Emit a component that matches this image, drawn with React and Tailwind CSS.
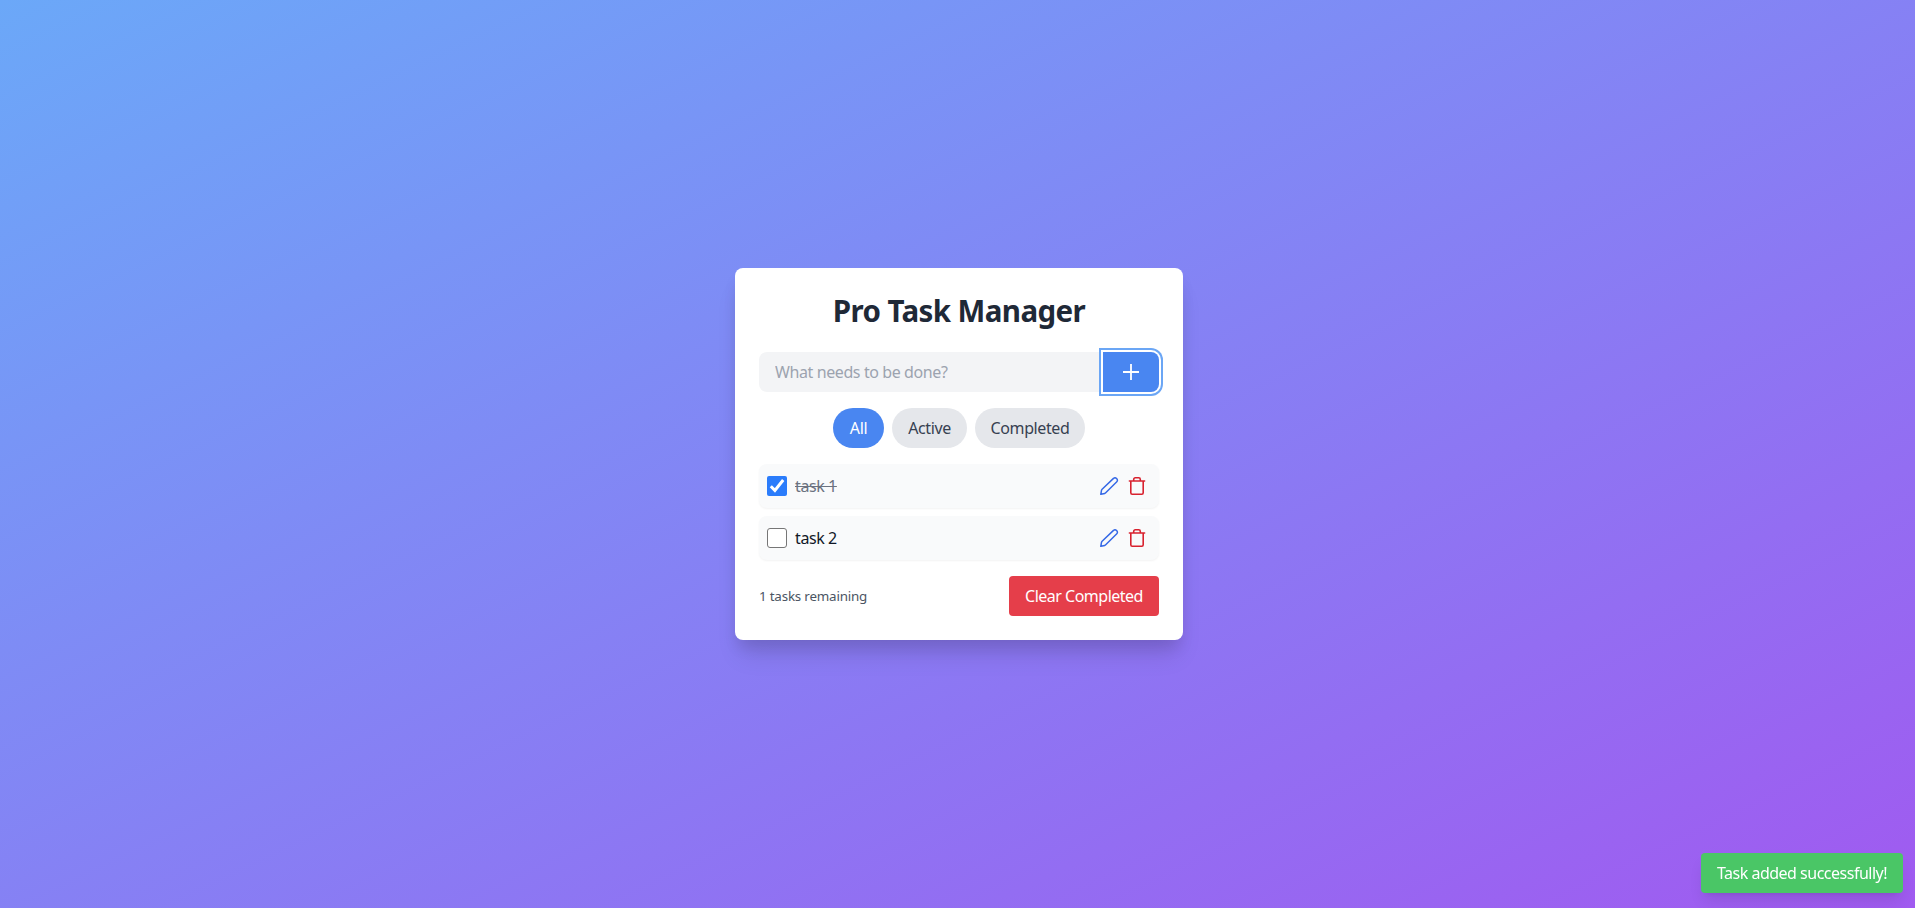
import React from "react";

const tasks = [
  { id: 1, text: "task 1", done: true },
  { id: 2, text: "task 2", done: false },
];

function PencilIcon() {
  return (
    <svg className="size-5" viewBox="0 0 20 20" fill="none" stroke="currentColor" strokeWidth="1.5" strokeLinecap="round" strokeLinejoin="round">
      <path d="M14.5 2.4a2.1 2.1 0 0 1 3 0l.3.3a2.1 2.1 0 0 1 0 3L6.7 16.8c-.3.3-.6.5-1 .6l-3.9.9.7-4c.1-.4.3-.7.6-1z" />
    </svg>
  );
}

function TrashIcon() {
  return (
    <svg className="size-5" viewBox="0 0 20 20" fill="none" stroke="currentColor" strokeWidth="1.6" strokeLinecap="round" strokeLinejoin="round">
      <path d="M2.4 5h15.2M6.7 5V3.4c0-.9.7-1.6 1.6-1.6h3.4c.9 0 1.6.7 1.6 1.6V5M3.8 5v11.8c0 .8.6 1.4 1.4 1.4h9.6c.8 0 1.4-.6 1.4-1.4V5" />
    </svg>
  );
}

function Checkbox({ checked }) {
  return (
    <span
      role="checkbox"
      aria-checked={checked}
      className={
        checked
          ? "size-5 shrink-0 rounded-[2px] bg-[#2b7cfb]"
          : "size-5 shrink-0 rounded-[3px] border border-[#767676] bg-white"
      }
    >
      {checked && (
        <svg className="size-5" viewBox="0 0 20 20" fill="none" stroke="white" strokeWidth="3">
          <path d="M3.8 10.3l4.1 4.1L16.2 4" />
        </svg>
      )}
    </span>
  );
}

export default function App() {
  return (
    <div className="flex min-h-screen items-center justify-center bg-[linear-gradient(to_bottom_right,#6ba8f8,#a05af0)] pl-[3px] font-['Noto_Sans','Open_Sans',sans-serif]">
      <main className="w-[448px] rounded-lg bg-white p-6 shadow-[0_10px_15px_-3px_rgba(0,0,0,0.1),0_20px_25px_-5px_rgba(0,0,0,0.1)]">
        <h1 className="mb-6 pt-px text-center text-[29.5px] leading-[35px] font-bold tracking-[-0.6px] whitespace-nowrap text-[#1f2937]">Pro Task Manager</h1>
        <div className="mb-4 flex">
          <input
            className="h-10 min-w-0 flex-1 rounded-l-lg bg-[#f3f4f6] px-4 text-[16px] tracking-[-0.4px] outline-none placeholder:text-[#9ca3af]"
            placeholder="What needs to be done?"
          />
          <button className="relative rounded-r-lg bg-[#4986f1] px-4 py-2 text-white ring-2 ring-[#6ba6f5] ring-offset-2">
            <svg className="size-6" viewBox="0 0 24 24" fill="none" stroke="currentColor" strokeWidth="1.8">
              <path d="M12 4v16M4 12h16" />
            </svg>
          </button>
        </div>
        <div className="mb-4 flex justify-center gap-2 text-[16px] leading-6 tracking-[-0.4px]">
          <button className="h-10 w-[51px] rounded-full bg-[#4986f1] text-white">All</button>
          <button className="h-10 w-[75px] rounded-full bg-[#e5e7eb] text-[#374151]">Active</button>
          <button className="h-10 w-[110px] rounded-full bg-[#e5e7eb] text-[#374151]">Completed</button>
        </div>
        <ul className="mb-4 flex flex-col gap-2">
          {tasks.map((t) => (
            <li key={t.id} className="flex h-11 items-center rounded-lg bg-[#f9fafb] p-2 shadow-[0_1px_2px_rgba(0,0,0,0.05)]">
              <Checkbox checked={t.done} />
              <span className={t.done ? "ml-2 flex-1 text-[16px] tracking-[-0.4px] text-[#6b7280] line-through" : "ml-2 flex-1 text-[16px] tracking-[-0.4px] text-[#111827]"}>
                {t.text}
              </span>
              <button className="p-1 text-[#3568e6]"><PencilIcon /></button>
              <button className="p-1 text-[#d8222f]"><TrashIcon /></button>
            </li>
          ))}
        </ul>
        <div className="flex items-center justify-between">
          <span className="text-[13.4px] tracking-[-0.2px] text-[#4b5563]">1 tasks remaining</span>
          <button className="h-10 w-[150px] rounded bg-[#e53e4a] text-[16px] tracking-[-0.5px] whitespace-nowrap text-white">Clear Completed</button>
        </div>
      </main>
      <div className="fixed right-3 bottom-[15px] flex h-10 w-[202px] items-center justify-center rounded bg-[#4ac666] text-[16px] tracking-[-0.5px] whitespace-nowrap text-white shadow-[0_10px_15px_-3px_rgba(0,0,0,0.1),0_4px_6px_-4px_rgba(0,0,0,0.1)]">
        Task added successfully!
      </div>
    </div>
  );
}
